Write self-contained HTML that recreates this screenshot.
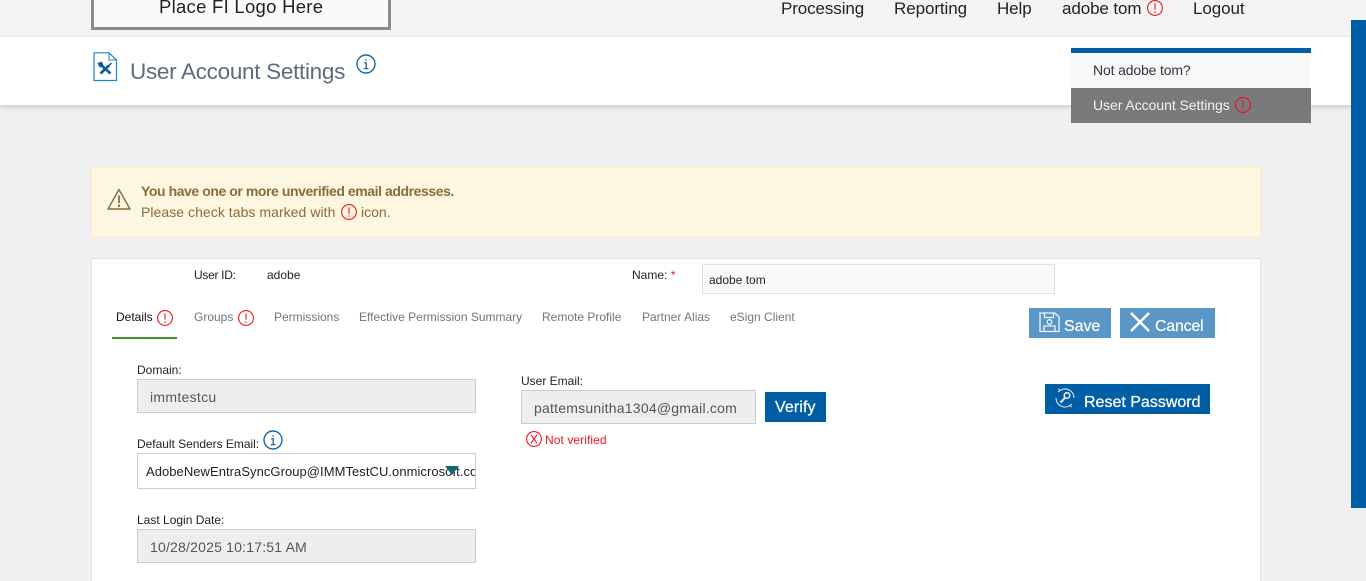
<!DOCTYPE html>
<html><head><meta charset="utf-8"><style>
html,body{margin:0;padding:0;width:1366px;height:581px;overflow:hidden;background:#f0f0f0;font-family:"Liberation Sans",sans-serif}
#w{position:absolute;left:0;top:0;width:1366px;height:581px;overflow:hidden}
.a{position:absolute;box-sizing:border-box}
.t{position:absolute;white-space:nowrap;line-height:20px;height:20px}
svg{position:absolute;overflow:visible}
</style></head><body><div id="w">
<svg width="0" height="0" style="position:absolute"><defs>
<g id="ex"><circle cx="8" cy="8" r="7.4" fill="none" stroke="#f0141e" stroke-width="1.1"/><path d="M8 3.400V9.800M8 11.200V12.600" stroke="#f0141e" stroke-width="1.100" fill="none"/></g>
<g id="inf"><circle cx="10" cy="10" r="9" fill="none" stroke="#1268ab" stroke-width="1.400"/><path d="M8.200 8.800H10.200V14.400M7.800 14.600H12.400M10 5.200V6.800" stroke="#1268ab" stroke-width="1.300" fill="none"/></g>
</defs></svg>

<div class="a" style="left:0;top:0;width:1366px;height:37px;background:#f4f4f4"></div>
<div class="a" style="left:91px;top:-10px;width:300px;height:40px;background:#fafafa;border:3px solid #8c8c8c"></div>
<div class="t" style="left:159px;top:-3px;font-size:18.5px;color:#222;letter-spacing:.27px">Place FI Logo Here</div>

<div class="t" style="left:781px;top:-1px;font-size:17px;color:#222;letter-spacing:-.1px">Processing</div>
<div class="t" style="left:894px;top:-1px;font-size:17px;color:#222;letter-spacing:-.08px">Reporting</div>
<div class="t" style="left:997px;top:-1px;font-size:17px;color:#222;letter-spacing:-.1px">Help</div>
<div class="t" style="left:1062px;top:-1px;font-size:17px;color:#222;letter-spacing:-.1px">adobe tom</div>
<svg style="left:1147px;top:0" width="16" height="16"><use href="#ex"/></svg>
<div class="t" style="left:1193px;top:-1px;font-size:17px;color:#222;letter-spacing:-.08px">Logout</div>

<div class="a" style="left:0;top:37px;width:1366px;height:68px;background:#fff;box-shadow:0 2px 5px rgba(0,0,0,.16)"></div>
<svg style="left:93px;top:52px" width="25" height="29" viewBox="0 0 25 29">
<path d="M1 .8H16L23.500 8V28.500H1Z" fill="#fff" stroke="#1b87c9" stroke-width="1.200"/><path d="M16 .8V8H23.500" fill="none" stroke="#1b87c9" stroke-width="1"/>
<path d="M8 13L17.500 21.500M16 13.500L7.500 21.500" stroke="#0b5c9e" stroke-width="2.600" fill="none"/><path d="M5.500 11.500L8.500 10.500L10 14L7 14.500ZM15 14.500L18.500 11" stroke="#0b5c9e" stroke-width="1.500" fill="#0b5c9e"/>
</svg>
<div class="t" style="left:130px;top:62px;font-size:22.5px;color:#5f6b7a;letter-spacing:-.3px">User Account Settings</div>
<svg style="left:356px;top:54px" width="20" height="20"><use href="#inf"/></svg>

<div class="a" style="left:1351px;top:20px;width:15px;height:488px;background:#005ea6"></div>

<div class="a" style="left:1071px;top:48px;width:240px;height:75px;background:#f8f8f8;border-top:5px solid #005ea6"></div>
<div class="t" style="left:1093px;top:60px;font-size:14px;color:#334;letter-spacing:-.15px">Not adobe tom?</div>
<div class="a" style="left:1071px;top:88px;width:240px;height:35px;background:#7a7a7c"></div>
<div class="t" style="left:1093px;top:95px;font-size:14px;color:#f2f2f2;letter-spacing:-.05px">User Account Settings</div>
<svg style="left:1235px;top:97px" width="16" height="16"><use href="#ex"/></svg>

<div class="a" style="left:91px;top:166px;width:1170px;height:72px;background:#fdf6e1;border:1px solid #f8ecd0;border-radius:2px"></div>
<svg style="left:107px;top:188px" width="24" height="22" viewBox="0 0 24 22"><path d="M12 1.500L23 21H1Z" fill="none" stroke="#8a6d3b" stroke-width="1.400" stroke-linejoin="round"/><path d="M12 7.500V15M12 16.500V19" stroke="#8a6d3b" stroke-width="1.800"/></svg>
<div class="t" style="left:141px;top:181px;font-size:14px;font-weight:bold;color:#8a6d3b;letter-spacing:-.43px">You have one or more unverified email addresses.</div>
<div class="t" style="left:141px;top:202px;font-size:14px;color:#8a6d3b;letter-spacing:.05px">Please check tabs marked with</div>
<svg style="left:341px;top:204px" width="16" height="16"><use href="#ex"/></svg>
<div class="t" style="left:361px;top:202px;font-size:14px;color:#8a6d3b">icon.</div>

<div class="a" style="left:91px;top:258px;width:1170px;height:340px;background:#fff;border:1px solid #e2e2e2"></div>

<div class="t" style="left:194px;top:265px;font-size:12px;color:#222;letter-spacing:-.3px">User ID:</div>
<div class="t" style="left:267px;top:265px;font-size:12px;color:#222">adobe</div>
<div class="t" style="left:632px;top:265px;font-size:12px;color:#222">Name: <span style="color:#f0141e">*</span></div>
<div class="a" style="left:702px;top:264px;width:353px;height:30px;background:#f9f9f9;border:1px solid #e2e2e2"></div>
<div class="t" style="left:709px;top:270px;font-size:12px;color:#222">adobe tom</div>

<div class="t" style="left:116px;top:307px;font-size:12px;color:#111">Details</div>
<svg style="left:157px;top:310px" width="16" height="16"><use href="#ex"/></svg>
<div class="a" style="left:112px;top:337px;width:65px;height:2px;background:#3d9a1f"></div>
<div class="t" style="left:194px;top:307px;font-size:12px;color:#6f7680">Groups</div>
<svg style="left:238px;top:310px" width="16" height="16"><use href="#ex"/></svg>
<div class="t" style="left:274px;top:307px;font-size:12px;color:#6f7680">Permissions</div>
<div class="t" style="left:359px;top:307px;font-size:12px;color:#6f7680">Effective Permission Summary</div>
<div class="t" style="left:542px;top:307px;font-size:12px;color:#6f7680">Remote Profile</div>
<div class="t" style="left:642px;top:307px;font-size:12px;color:#6f7680">Partner Alias</div>
<div class="t" style="left:730px;top:307px;font-size:12px;color:#6f7680">eSign Client</div>

<div class="a" style="left:1029px;top:308px;width:82px;height:30px;background:#5a96c6"></div>
<svg style="left:1039px;top:312px" width="21" height="20" viewBox="0 0 21 20" fill="none" stroke="#eef5fa" stroke-width="1.300"><path d="M1 1H16L20 5V19.500H1Z"/><path d="M5.500 1V5.500H14.500V1M5 19.500V14H16V19.500"/><circle cx="10.500" cy="10" r="2.300"/></svg>
<div class="t" style="left:1064px;top:317px;font-size:16px;color:#fff;letter-spacing:-.05px;-webkit-text-stroke:.2px #fff">Save</div>
<div class="a" style="left:1120px;top:308px;width:95px;height:30px;background:#5a96c6"></div>
<svg style="left:1130px;top:312px" width="20" height="20" viewBox="0 0 20 20"><path d="M1 1L19 19M19 1L1 19" stroke="#fff" stroke-width="2.400"/></svg>
<div class="t" style="left:1155px;top:317px;font-size:16px;color:#fff;letter-spacing:-.25px;-webkit-text-stroke:.2px #fff">Cancel</div>

<div class="a" style="left:1045px;top:384px;width:165px;height:30px;background:#005ea6"></div>
<svg style="left:1055px;top:388px" width="20" height="20" viewBox="0 0 20 20" fill="none" stroke="#e8f1f8"><path d="M5 2.500A9 9 0 0 1 19 10M15 17.500A9 9 0 0 1 1 10" stroke-width="1"/><path d="M3.500 .8L5 2.500L3 4M16.500 19.200L15 17.500L17 16" stroke-width="1"/><circle cx="12" cy="7.500" r="2.800" stroke-width="1.600"/><path d="M10 9.800L5.500 14.500" stroke-width="2"/></svg>
<div class="t" style="left:1084px;top:393px;font-size:16px;color:#fff;letter-spacing:0;-webkit-text-stroke:.25px #fff">Reset Password</div>

<div class="t" style="left:137px;top:360px;font-size:12px;color:#222">Domain:</div>
<div class="a" style="left:137px;top:379px;width:339px;height:34px;background:#eee;border:1px solid #ccc"></div>
<div class="t" style="left:150px;top:387px;font-size:14px;color:#555;letter-spacing:.3px">immtestcu</div>

<div class="t" style="left:137px;top:434px;font-size:12px;color:#222;letter-spacing:-.03px">Default Senders Email:</div>
<svg style="left:263px;top:430px" width="20" height="20"><use href="#inf"/></svg>
<div class="a" style="left:137px;top:453px;width:339px;height:36px;background:#fff;border:1px solid #ccc"></div>
<div class="a" style="left:138px;top:454px;width:337px;height:34px;overflow:hidden"><div class="t" style="left:8px;top:8px;font-size:13px;color:#222;letter-spacing:.05px">AdobeNewEntraSyncGroup@IMMTestCU.onmicrosoft.com</div></div>
<svg style="left:445px;top:466px" width="14" height="10"><path d="M0 0H14L7 9Z" fill="#0f6a75"/></svg>

<div class="t" style="left:137px;top:510px;font-size:12px;color:#222">Last Login Date:</div>
<div class="a" style="left:137px;top:529px;width:339px;height:34px;background:#eee;border:1px solid #ccc"></div>
<div class="t" style="left:150px;top:537px;font-size:14px;color:#555;letter-spacing:.2px">10/28/2025 10:17:51 AM</div>

<div class="t" style="left:521px;top:371px;font-size:12px;color:#222">User Email:</div>
<div class="a" style="left:521px;top:390px;width:235px;height:34px;background:#eee;border:1px solid #ccc"></div>
<div class="t" style="left:534px;top:398px;font-size:14px;color:#555;letter-spacing:.22px">pattemsunitha1304@gmail.com</div>
<div class="a" style="left:765px;top:392px;width:61px;height:30px;background:#005ea6"></div>
<div class="t" style="left:775px;top:398px;font-size:16px;color:#fff;letter-spacing:.1px;-webkit-text-stroke:.25px #fff">Verify</div>
<svg style="left:526px;top:431px" width="16" height="16" viewBox="0 0 16 16"><circle cx="8" cy="8" r="7.400" fill="none" stroke="#f0141e" stroke-width="1.100"/><path d="M5 3.800L11 12.200M11 3.800L5 12.200" stroke="#f0141e" stroke-width="1.100"/></svg>
<div class="t" style="left:545px;top:430px;font-size:12px;color:#f0141e;letter-spacing:.08px">Not verified</div>
</div></body></html>
